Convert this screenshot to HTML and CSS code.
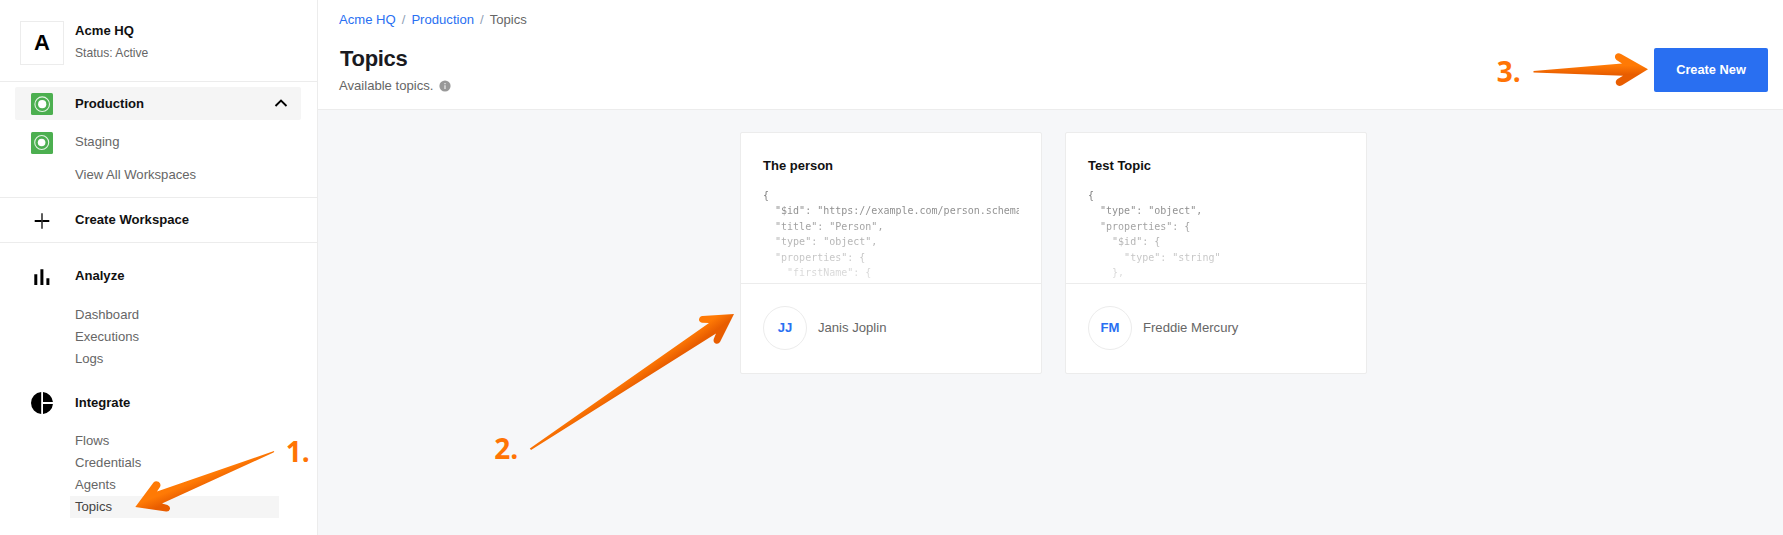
FILE: index.html
```html
<!DOCTYPE html>
<html lang="en">
<head>
<meta charset="utf-8">
<title>Topics</title>
<link rel="stylesheet" href="styles.css">
</head>
<body>
<div class="app">
  <aside class="sidebar">
    <div class="account">
      <div class="logo">A</div>
      <div class="account-info"><div class="strong">Acme HQ</div><div class="status">Status: Active</div></div>
    </div>
    <nav class="workspaces">
      <div class="workspace current">
        <svg class="ws-icon" viewBox="0 0 22 22"><rect width="22" height="22" rx="1.5" fill="#4caf50"/><circle cx="11.2" cy="11.2" r="7.3" fill="none" stroke="#fff" stroke-opacity=".85" stroke-width="1.1"/><circle cx="11.2" cy="11.2" r="4.1" fill="#fff"/></svg>
        <span class="strong">Production</span>
        <svg class="chevron" viewBox="0 0 14 8"><path d="M1.500 7 7 1.500 12.500 7" fill="none" stroke="#000" stroke-width="1.9"/></svg>
      </div>
      <div class="workspace">
        <svg class="ws-icon" viewBox="0 0 22 22"><rect width="22" height="22" rx="1.5" fill="#4caf50"/><circle cx="10.7" cy="10.5" r="7" fill="none" stroke="#fff" stroke-opacity=".85" stroke-width="1.1"/><circle cx="10.6" cy="10.5" r="3.8" fill="#fff"/></svg>
        <span>Staging</span>
      </div>
      <div class="view-all">View All Workspaces</div>
    </nav>
    <div class="create">
      <svg class="plus" viewBox="0 0 16 16"><path d="M.7 8H15.3" stroke="#000" stroke-width="2"/><path d="M8 .3V15.7" stroke="#333" stroke-width="1.6"/></svg>
      <span class="strong">Create Workspace</span>
    </div>
    <section class="group">
      <div class="group-head">
        <svg class="bars" viewBox="0 0 16 16"><path d="M.3 5.200h3V16H.3zM6.400.3h3v15.700h-3zM12.400 9.200h3V16h-3z"/></svg>
        <span class="strong">Analyze</span>
      </div>
      <div class="links"><a>Dashboard</a><a>Executions</a><a>Logs</a></div>
    </section>
    <section class="group integrate">
      <div class="group-head">
        <svg class="pie" viewBox="0 0 22 22"><path d="M10.200 .03V21.970A11 11 0 0 1 10.200 .03ZM12 .05A11 11 0 0 1 21.950 10H12ZM12 12H21.950A11 11 0 0 1 12 21.950Z"/></svg>
        <span class="strong">Integrate</span>
      </div>
      <div class="links"><a>Flows</a><a>Credentials</a><a>Agents</a><a class="selected">Topics</a></div>
    </section>
  </aside>
  <main class="main">
    <header class="header">
      <div>
        <div class="crumbs"><a>Acme HQ</a><i>/</i><a>Production</a><i>/</i><span>Topics</span></div>
        <h1>Topics</h1>
        <div class="sub"><span>Available topics.</span><svg class="info" viewBox="0 0 12 12"><circle cx="6" cy="6" r="5.6" fill="#999"/><path d="M6 3V4.200M6 5.200V9" stroke="#eee" stroke-width="1.2"/></svg></div>
      </div>
      <button class="button">Create New</button>
    </header>
    <div class="cards">
      <article class="card">
        <div class="card-top">
          <h2>The person</h2>
          <pre>{
  "$id": "https://example.com/person.schema
  "title": "Person",
  "type": "object",
  "properties": {
    "firstName": {</pre>
        </div>
        <div class="owner"><div class="avatar">JJ</div><span>Janis Joplin</span></div>
      </article>
      <article class="card">
        <div class="card-top">
          <h2>Test Topic</h2>
          <pre>{
  "type": "object",
  "properties": {
    "$id": {
      "type": "string"
    },</pre>
        </div>
        <div class="owner"><div class="avatar">FM</div><span>Freddie Mercury</span></div>
      </article>
    </div>
  </main>
</div>
<svg class="notes" viewBox="0 0 1783 535">
  <defs>
    <linearGradient id="g1" gradientUnits="userSpaceOnUse" x1="202" y1="468" x2="212" y2="493"><stop offset=".35" stop-color="#ff7a05"/><stop offset=".75" stop-color="#e85d00"/></linearGradient>
    <linearGradient id="g2" gradientUnits="userSpaceOnUse" x1="629" y1="373" x2="638" y2="386"><stop offset=".2" stop-color="#ff7a05"/><stop offset=".9" stop-color="#e85d00"/></linearGradient>
    <linearGradient id="g3" gradientUnits="userSpaceOnUse" x1="1600" y1="55" x2="1600" y2="85"><stop offset=".35" stop-color="#ff7a05"/><stop offset=".65" stop-color="#e85d00"/></linearGradient>
  </defs>
  <path fill="url(#g1)" d="M274 451 Q274.500 452 273.500 452.600 L162 503.500 L167.500 505 Q170.500 506.500 170 509 Q169 512 166 511.500 L135.300 507 L153.500 482.500 Q155.500 480.500 158.500 481.800 Q161.500 484 160 487 L157 491.500Z"/>
  <path fill="url(#g2)" d="M529.800 448.500 L709 323 L702 322.700 Q699 322 699 319.500 Q699.500 316.300 702.500 316 L734 314 L720 342 Q718.500 344.500 715.500 343.500 Q713 342.300 713.700 339 L716 333.500 L531 450Z"/>
  <path fill="url(#g3)" d="M1533.500 71 L1622 63.500 L1616.500 60 Q1614 57.500 1615.500 54.800 Q1618 52.300 1621 54 L1648 69.200 L1622 85.300 Q1618.500 87 1616.500 84.500 Q1614.500 81.500 1617.500 79 L1623 75.700 L1533.500 72.500Z"/>
  <text x="285.700" y="461.800">1.</text><text x="494.200" y="458.800">2.</text><text x="1496.800" y="82">3.</text>
</svg>
</body>
</html>
```
FILE: styles.css
```css
* { box-sizing: border-box; }
body { margin: 0; font: 13.1px/22px "Liberation Sans", Arial, sans-serif; color: #666; }
svg { display: block; flex: none; }
h1, h2 { margin: 0; }
.app { display: flex; height: 535px; overflow: hidden; }
.strong { font-weight: 700; color: #111; }

.sidebar { width: 318px; flex: none; border-right: 1px solid #ececec; background: #fff; }
.account { display: flex; gap: 11px; height: 82px; padding: 21px 0 0 20px; border-bottom: 1px solid #ececec; }
.logo { width: 44px; height: 44px; border: 1px solid #ececec; font: 700 22px/41px "Liberation Sans", Arial, sans-serif; color: #000; text-align: center; }
.account-info { margin-top: -1px; }
.status { font-size: 12.1px; }
.workspaces { height: 116px; padding: 5px 16px 0 15px; border-bottom: 1px solid #ececec; }
.workspace { display: flex; align-items: center; height: 33px; padding-left: 16px; margin-bottom: 6px; }
.workspace.current { background: #f5f5f5; border-radius: 2px; }
.ws-icon { width: 22px; height: 22px; margin: 1px 22px 0 0; }
.chevron { width: 14px; height: 8px; margin: -2px 13px 0 auto; }
.workspace:not(.current) { height: 32px; margin-bottom: 0; }
.view-all { padding-left: 60px; margin-top: 6px; }
.create { display: flex; gap: 25px; height: 45px; padding: 11px 0 0 34px; border-bottom: 1px solid #ececec; }
.plus { width: 16px; height: 16px; margin-top: 4px; }
.group { padding-top: 22px; }
.group-head { display: flex; height: 22px; padding-left: 34px; gap: 25px; }
.bars { width: 16px; height: 16px; margin-top: 4px; }
.links { padding: 17px 0 0 70px; }
.links a { display: block; width: 209px; padding-left: 5px; }
.links .selected { background: #f5f5f5; color: #444; }
.integrate .links { padding-top: 16px; }
.integrate .group-head { padding-left: 31px; gap: 22px; }
.pie { width: 22px; height: 22px; }

.main { flex: 1; min-width: 0; background: #f6f7f9; }
.header { display: flex; justify-content: space-between; height: 110px; padding: 9px 15px 0 21px; background: #fff; border-bottom: 1px solid #ececec; }
.crumbs { display: flex; gap: 6px; }
.crumbs a { color: #2970f2; }
.crumbs i { font-style: normal; color: #8fa0b5; }
h1 { font-size: 22px; line-height: 30px; letter-spacing: -.3px; color: #1a1a1f; margin: 13px 0 0 1px; }
.sub { display: flex; gap: 6px; margin-top: 1px; }
.info { width: 12px; height: 12px; margin-top: 5px; }
.button { width: 114px; height: 44px; margin-top: 39px; padding: 0 0 2px; border: 0; border-radius: 2px; background: #296ff1; color: #fff; font: 700 12.8px "Liberation Sans", Arial, sans-serif; }

.cards { display: flex; gap: 23px; padding: 22px 0 0 422px; }
.card { width: 302px; height: 242px; border: 1px solid #ececec; border-radius: 2px; background: #fff; }
.card-top { height: 151px; padding: 22px 22px 0; border-bottom: 1px solid #ececec; }
h2 { font-size: 13px; line-height: 22px; color: #111; }
pre { height: 94px; margin: 11px 0 0; overflow: hidden; font: 10px/15.4px "DejaVu Sans Mono", monospace; color: #777; mask-image: linear-gradient(#000, rgba(0, 0, 0, .2)); }
.owner { display: flex; align-items: center; gap: 11px; height: 88px; padding-left: 22px; }
.avatar { width: 44px; height: 44px; border: 1px solid #ececec; border-radius: 50%; line-height: 42px; text-align: center; font-weight: 700; color: #2970f2; }
.notes { position: absolute; left: 0; top: 0; width: 1783px; height: 535px; pointer-events: none; }
.notes text { font: 700 28px "Open Sans", sans-serif; fill: #ff7405; }
```
